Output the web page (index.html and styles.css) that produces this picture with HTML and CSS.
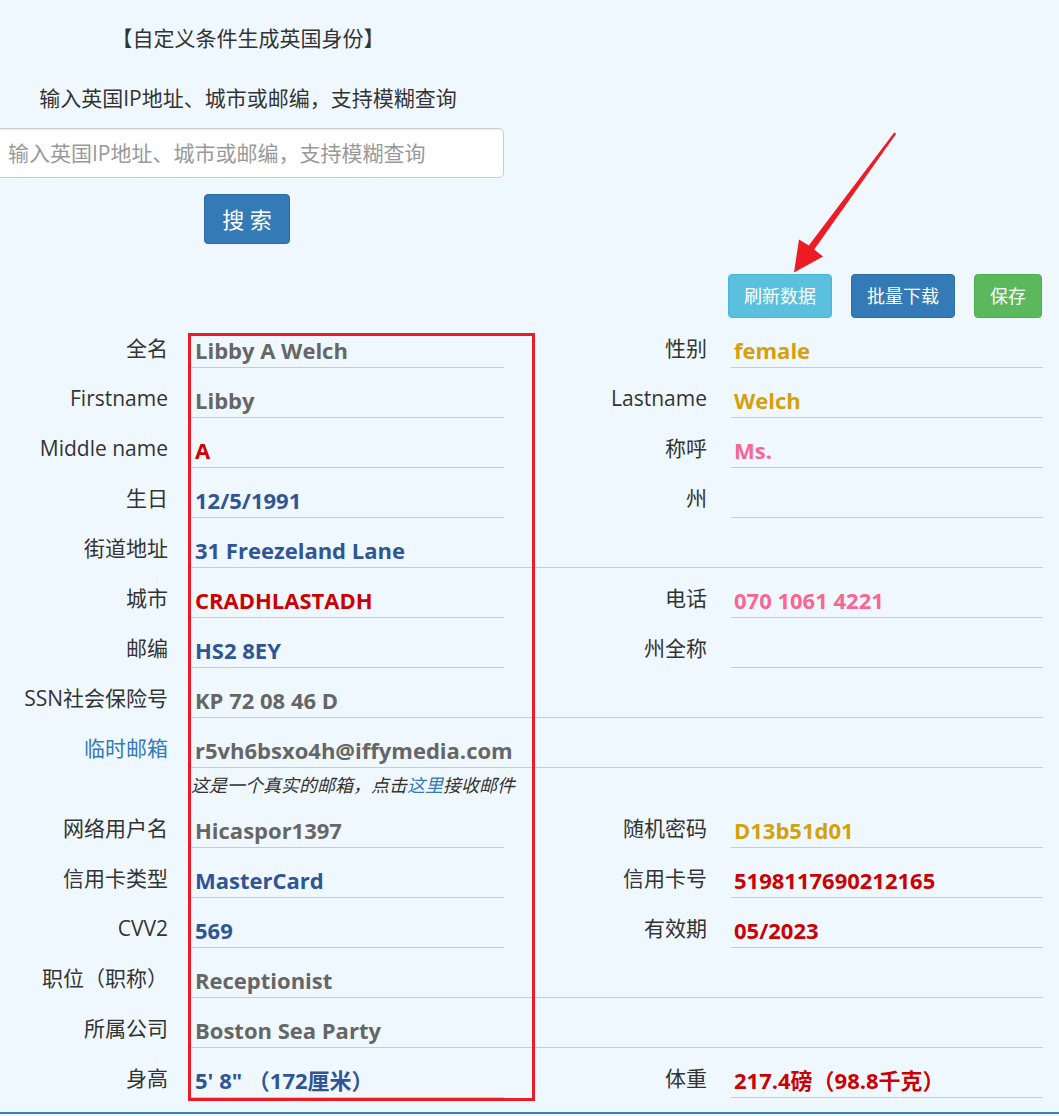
FILE: index.html
```html
<!DOCTYPE html>
<html lang="zh-CN">
<head>
<meta charset="utf-8">
<title>自定义条件生成英国身份</title>
<link rel="stylesheet" href="styles.css">
</head>
<body>
<div class="page">
  <section class="search">
    <p class="search-title">【自定义条件生成英国身份】</p>
    <p class="search-hint">输入英国IP地址、城市或邮编，支持模糊查询</p>
    <input class="search-input" type="text" placeholder="输入英国IP地址、城市或邮编，支持模糊查询">
    <button class="btn btn-primary btn-search" type="button">搜 索</button>
  </section>

  <div class="actions">
    <button class="btn btn-info" type="button">刷新数据</button>
    <button class="btn btn-primary" type="button">批量下载</button>
    <button class="btn btn-success" type="button">保存</button>
  </div>

  <table class="info">
    <colgroup>
      <col class="c-l1"><col class="c-v1"><col class="c-l2"><col class="c-v2">
    </colgroup>
    <tr><th>全名</th><td class="gray">Libby A Welch</td><th class="l2">性别</th><td class="v2 gold">female</td></tr>
    <tr><th>Firstname</th><td class="gray">Libby</td><th class="l2">Lastname</th><td class="v2 gold">Welch</td></tr>
    <tr><th>Middle name</th><td class="red">A</td><th class="l2">称呼</th><td class="v2 pink">Ms.</td></tr>
    <tr><th>生日</th><td class="blue">12/5/1991</td><th class="l2">州</th><td class="v2"></td></tr>
    <tr><th>街道地址</th><td class="blue" colspan="3">31 Freezeland Lane</td></tr>
    <tr><th>城市</th><td class="red">CRADHLASTADH</td><th class="l2">电话</th><td class="v2 pink">070 1061 4221</td></tr>
    <tr><th>邮编</th><td class="blue">HS2 8EY</td><th class="l2">州全称</th><td class="v2"></td></tr>
    <tr><th>SSN社会保险号</th><td class="gray" colspan="3">KP 72 08 46 D</td></tr>
    <tr><th><a class="label-link" href="#">临时邮箱</a></th><td class="gray" colspan="3">r5vh6bsxo4h@iffymedia.com</td></tr>
    <tr class="note-row"><th></th><td class="note" colspan="3">这是一个真实的邮箱，点击<a href="#">这里</a>接收邮件</td></tr>
    <tr><th>网络用户名</th><td class="gray">Hicaspor1397</td><th class="l2">随机密码</th><td class="v2 gold">D13b51d01</td></tr>
    <tr><th>信用卡类型</th><td class="blue">MasterCard</td><th class="l2">信用卡号</th><td class="v2 red">5198117690212165</td></tr>
    <tr><th>CVV2</th><td class="blue">569</td><th class="l2">有效期</th><td class="v2 red">05/2023</td></tr>
    <tr><th>职位（职称）</th><td class="gray" colspan="3">Receptionist</td></tr>
    <tr><th>所属公司</th><td class="gray" colspan="3">Boston Sea Party</td></tr>
    <tr><th>身高</th><td class="blue">5' 8" （172厘米）</td><th class="l2">体重</th><td class="v2 red">217.4磅（98.8千克）</td></tr>
  </table>

  <div class="footer-rule"></div>
</div>

<div class="highlight"></div>
<svg class="arrow" width="1059" height="300" viewBox="0 0 1059 300" aria-hidden="true">
  <polygon points="894.2,132.4 896.2,133.8 814.2,249.6 823,256.5 794,272.5 799,239.5 808.8,245.6" fill="#ec1b24"/>
</svg>
</body>
</html>
```

FILE: styles.css
```css
* {
  box-sizing: border-box;
}

html,
body {
  margin: 0;
  padding: 0;
}

body {
  position: relative;
  background: #f0f8ff;
  color: #333;
  font-family: "Open Sans", "Noto Sans CJK SC", sans-serif;
  font-size: 16px;
}

.page {
  width: 1043px;
}

/* search block */
.search {
  width: 512px;
  margin-left: -8px;
  text-align: center;
}

.search-title {
  margin: 0;
  padding-top: 23px;
  font-size: 21px;
  line-height: 30px;
}

.search-hint {
  margin: 30px 0 0;
  font-size: 21px;
  line-height: 30px;
}

.search-input {
  display: block;
  width: 100%;
  height: 50px;
  margin: 15px 0 0;
  padding: 0 15px;
  font-family: inherit;
  font-size: 21px;
  color: #555;
  background: #fff;
  border: 1px solid #ccc;
  border-radius: 5px;
  box-shadow: inset 0 1px 1px rgba(0, 0, 0, 0.075);
  outline: none;
}

.search-input::placeholder {
  color: #999;
}

/* buttons */
.btn {
  font-family: inherit;
  font-size: 18px;
  font-weight: 400;
  line-height: 26px;
  padding: 8px 15px;
  border: 1px solid transparent;
  border-radius: 4px;
  color: #fff;
  cursor: pointer;
}

.btn-primary {
  background: #337ab7;
  border-color: #2e6da4;
}

.btn-info {
  background: #5bc0de;
  border-color: #46b8da;
}

.btn-success {
  background: #5cb85c;
  border-color: #4cae4c;
}

.btn-search {
  display: block;
  margin: 16px auto 0;
  font-size: 22px;
  line-height: 30px;
  padding: 9px 17px;
  transform: translateX(-1px);
}

.actions {
  display: flex;
  justify-content: flex-end;
  gap: 19px;
  margin-top: 30px;
  padding-right: 1px;
}

/* info table */
.info {
  width: 1043px;
  table-layout: fixed;
  border-collapse: separate;
  border-spacing: 0;
}

.c-l1 { width: 190px; }
.c-v1 { width: 314px; }
.c-l2 { width: 227px; }
.c-v2 { width: 312px; }

.info th {
  font-weight: 400;
  font-size: 21px;
  line-height: 30px;
  text-align: right;
  vertical-align: top;
  padding: 15px 22px 0 0;
  color: #333;
  white-space: nowrap;
}

.info th.l2 {
  padding-right: 24px;
}

.info td {
  font-weight: 700;
  font-size: 22px;
  line-height: 30px;
  vertical-align: top;
  padding: 17px 0 2px 5px;
  border-bottom: 1px solid #ccc;
  white-space: nowrap;
  height: 50px;
}

.info td.v2 {
  padding-left: 3px;
}

.label-link {
  color: #337ab7;
  text-decoration: none;
}

.note-row th {
  padding: 0;
}

.info td.note {
  height: 30px;
  padding: 5px 0 1px 1px;
  border-bottom: none;
  font-size: 18px;
  font-weight: 400;
  font-style: italic;
  line-height: 24px;
  color: #333;
}

.note a {
  color: #337ab7;
  text-decoration: none;
}

.gray { color: #666; }
.red { color: #cc0000; }
.blue { color: #2f5597; }
.gold { color: #d6a00c; }
.pink { color: #fa6691; }

.footer-rule {
  margin-top: 14px;
  width: 1059px;
  height: 2px;
  background: #3a80c0;
}

/* annotations drawn over the page */
.highlight {
  position: absolute;
  left: 188px;
  top: 333px;
  width: 347px;
  height: 768px;
  border: 3px solid #ec1b24;
  pointer-events: none;
}

.arrow {
  position: absolute;
  left: 0;
  top: 0;
  pointer-events: none;
}
```
